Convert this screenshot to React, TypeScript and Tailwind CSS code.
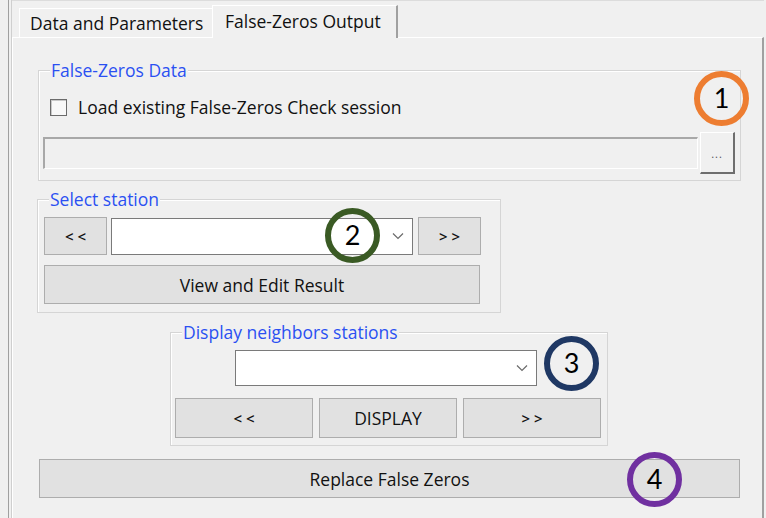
import React from "react";

const btn =
  "flex items-center justify-center bg-[#e1e1e1] border border-[#adadad] leading-[22px] text-[#111]";
const txt = "text-[17.5px]";
const arrow = "text-[15px] font-semibold";

function Chevron() {
  return (
    <svg width="12" height="8" viewBox="0 0 12 8" className="mr-[8px]">
      <path d="M1 1.5 L6 6.5 L11 1.5" stroke="#6b6b6b" strokeWidth="1.2" fill="none" />
    </svg>
  );
}

function GroupBox({
  title,
  className,
  children,
}: {
  title: string;
  className: string;
  children: React.ReactNode;
}) {
  return (
    <div className={`relative border border-[#d5d5d5] shadow-[inset_1px_1px_0_#fff] ${className}`}>
      <span className="absolute left-[11px] top-[-12px] bg-[#f0f0f0] px-px text-[17.5px] leading-[22px] text-[#2b50f2]">
        {title}
      </span>
      {children}
    </div>
  );
}

function Marker({ n, color, className }: { n: string; color: string; className: string }) {
  return (
    <div
      className={`absolute flex h-[55px] w-[55px] items-center justify-center rounded-full border-[6px] font-['Lato',sans-serif] text-[27px] text-black ${color} ${className}`}
    >
      {n}
    </div>
  );
}

export default function App() {
  return (
    <div className="relative flex h-[518px] w-[766px] overflow-hidden bg-[#f0f0f0] pl-[8px] pr-[2px] font-['Open_Sans',sans-serif] text-[#111]">
      <div className="flex flex-1 border-l border-[#a0a0a0] pl-[2px]">
        <div className="flex flex-1 border-l border-[#cfcfcf]">
          <div className="flex flex-1 flex-col">
            {/* tab strip */}
            <div className="flex h-[37px] items-end border-t border-[#dcdcdc] pl-[7px]">
              <div className="flex h-[29px] w-[193px] items-center border-l border-t border-white pl-[10px] text-[17.5px]">
                Data and Parameters
              </div>
              <div className="relative z-10 -mb-px flex h-[33px] w-[186px] items-center border-l border-t border-r-2 border-l-white border-t-white border-r-[#a0a0a0] bg-[#f0f0f0] pb-[2px] pl-[12px] text-[17.5px]">
                False-Zeros Output
              </div>
            </div>

            {/* tab page */}
            <div className="flex flex-1 flex-col border-l border-t border-r-2 border-l-white border-t-white border-r-[#a0a0a0]">
              <GroupBox title="False-Zeros Data" className="ml-[25px] mt-[32px] h-[111px] w-[703px]">
                <div className="ml-[11px] mt-[25px] flex h-[22px] items-center gap-[11px] text-[17.5px]">
                  <span className="h-[17px] w-[17px] border border-[#6b6b6b] bg-[#f8f8f8] shadow-[inset_1px_1px_0_#c8c8c8]" />
                  Load existing False-Zeros Check session
                </div>
                <div className="ml-[4px] mt-[14px] flex items-center gap-[2px]">
                  <div className="h-[32px] w-[655px] border-b border-l-2 border-r border-t-2 border-b-white border-l-[#a8a8a8] border-r-white border-t-[#a8a8a8] bg-[#f0f0f0]" />
                  <div className="flex h-[42px] w-[35px] items-center justify-center border-b-2 border-l border-r-2 border-t border-b-[#6e6e6e] border-l-white border-r-[#6e6e6e] border-t-white bg-[#f0f0f0] pt-[4px] text-[11px] tracking-[1px] text-[#555]">
                    ...
                  </div>
                </div>
              </GroupBox>

              <GroupBox title="Select station" className="ml-[24px] mt-[18px] h-[114px] w-[464px]">
                <div className="ml-[6px] mt-[17px] flex items-center">
                  <div className={`${btn} ${arrow} h-[38px] w-[63px]`}>&lt; &lt;</div>
                  <div className="ml-[4px] flex h-[37px] w-[302px] items-center justify-end border border-[#7a7a7a] bg-white">
                    <Chevron />
                  </div>
                  <div className={`${btn} ${arrow} ml-[5px] h-[38px] w-[63px]`}>&gt; &gt;</div>
                </div>
                <div className={`${btn} ${txt} ml-[6px] mt-[10px] h-[39px] w-[436px]`}>View and Edit Result</div>
              </GroupBox>

              <GroupBox title="Display neighbors stations" className="ml-[157px] mt-[19px] h-[114px] w-[438px]">
                <div className="ml-[64px] mt-[17px] flex h-[36px] w-[302px] items-center justify-end border border-[#7a7a7a] bg-white">
                  <Chevron />
                </div>
                <div className="ml-[4px] mt-[12px] flex gap-[6px]">
                  <div className={`${btn} ${arrow} h-[40px] w-[138px]`}>&lt; &lt;</div>
                  <div className={`${btn} ${txt} h-[40px] w-[138px]`}>DISPLAY</div>
                  <div className={`${btn} ${arrow} h-[40px] w-[138px]`}>&gt; &gt;</div>
                </div>
              </GroupBox>

              <div className={`${btn} ${txt} ml-[26px] mt-[13px] h-[39px] w-[701px]`}>Replace False Zeros</div>
            </div>
          </div>
        </div>
      </div>

      <Marker n="1" color="border-[#ed7d31]" className="left-[694px] top-[71px]" />
      <Marker n="2" color="border-[#3a5a24]" className="left-[325px] top-[208px]" />
      <Marker n="3" color="border-[#1f3864]" className="left-[544px] top-[336px]" />
      <Marker n="4" color="border-[#7030a0]" className="left-[627px] top-[452px]" />
    </div>
  );
}
